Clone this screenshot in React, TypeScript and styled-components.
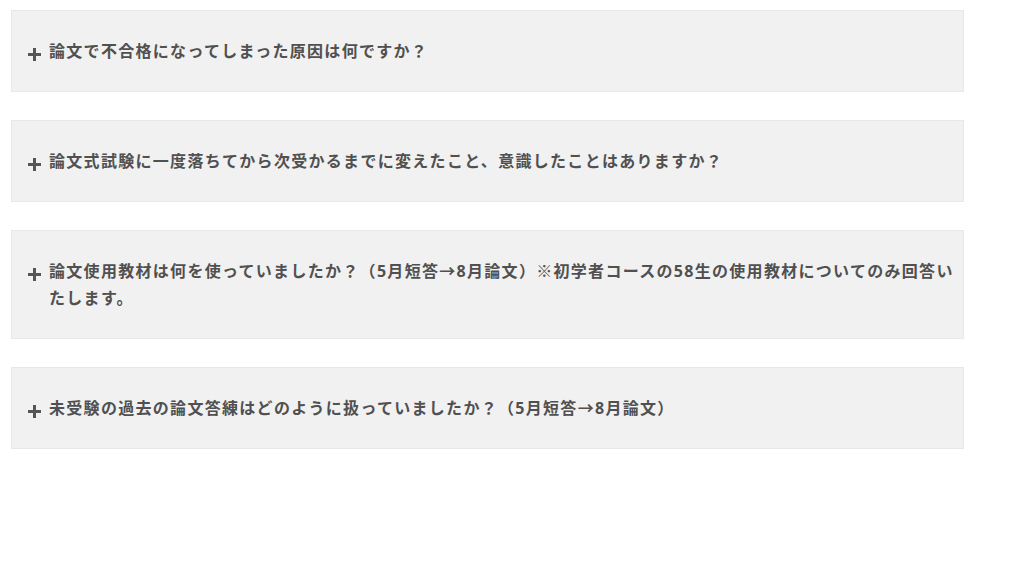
import React from "react"
import styled, { createGlobalStyle } from "styled-components"

const GlobalStyle = createGlobalStyle`
  body {
    margin: 0;
    background: #ffffff;
    font-family: "Open Sans", "Noto Sans CJK JP", sans-serif;
  }
`;

// 一覧
const FaqList = styled.div`
  display: flex;
  flex-direction: column;
  gap: 28px;
  padding: 10px 0 0 11px;
  width: 953px;
`;

// 質問ボックス
const FaqItem = styled.div`
  display: flex;
  align-items: flex-start;
  background: #f1f1f1;
  border: 1px solid #e8e8e8;
  padding: 27px 4px 26px 16px;
`;

const PlusIcon = styled.span`
  flex: none;
  position: relative;
  width: 13px;
  height: 27px;
  margin-right: 8px;

  &::before,
  &::after {
    content: '';
    position: absolute;
    background: #555555;
  }
  &::before {
    left: 0;
    top: 15px;
    width: 13px;
    height: 3px;
  }
  &::after {
    left: 5px;
    top: 10px;
    width: 3px;
    height: 13px;
  }
`;

const Question = styled.p`
  margin: 0;
  color: #505050;
  font-size: 16px;
  font-weight: 700;
  line-height: 27px;
  letter-spacing: 1.3px;
`;

const questions = [
  "論文で不合格になってしまった原因は何ですか？",
  "論文式試験に一度落ちてから次受かるまでに変えたこと、意識したことはありますか？",
  "論文使用教材は何を使っていましたか？（5月短答→8月論文）※初学者コースの58生の使用教材についてのみ回答いたします。",
  "未受験の過去の論文答練はどのように扱っていましたか？（5月短答→8月論文）",
];

const App = () => (
  <>
    <GlobalStyle />
    <FaqList>
      {questions.map((q) => (
        <FaqItem key={q}>
          <PlusIcon />
          <Question>{q}</Question>
        </FaqItem>
      ))}
    </FaqList>
  </>
);

export default App;
